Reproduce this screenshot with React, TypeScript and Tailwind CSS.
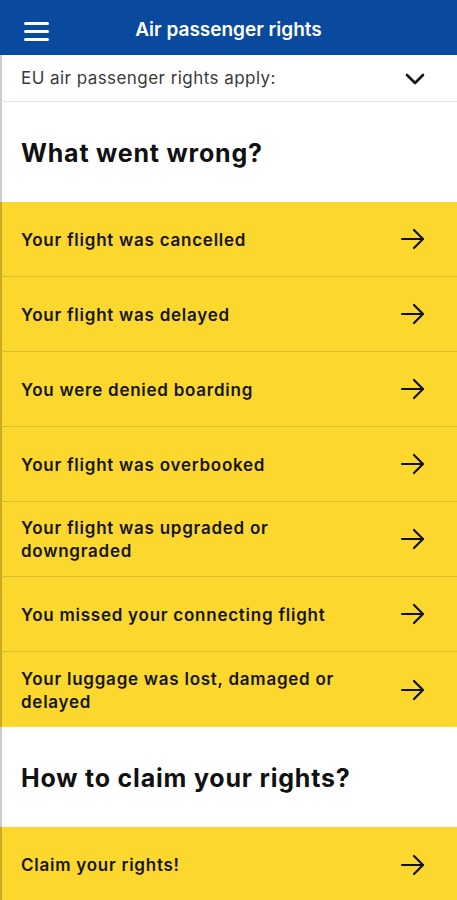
const items = [
  'Your flight was cancelled',
  'Your flight was delayed',
  'You were denied boarding',
  'Your flight was overbooked',
  'Your flight was upgraded or downgraded',
  'You missed your connecting flight',
  'Your luggage was lost, damaged or delayed',
]

function Arrow() {
  return (
    <svg width="26" height="22" viewBox="0 0 26 22" fill="none" stroke="#111" strokeWidth="2.2" strokeLinecap="round" strokeLinejoin="round">
      <path d="M2 11h21" />
      <path d="M14 2l9 9-9 9" />
    </svg>
  )
}

function Row({ label, last }: { label: string; last?: boolean }) {
  return (
    <div
      className={`flex h-[75px] items-center justify-between border-l-2 border-l-black/20 bg-[#fcd82f] pl-[19px] pr-[31px] ${
        last ? '' : 'border-b border-b-[#dcbd2c]'
      }`}
    >
      <span className="max-w-[340px] pt-[2px] text-[17px] font-semibold leading-[23px] tracking-[0.75px] text-[#161616]">{label}</span>
      <Arrow />
    </div>
  )
}

export default function App() {
  return (
    <div className="h-[900px] w-[457px] overflow-hidden bg-white font-['Inter',sans-serif]">
      {/* Header */}
      <div className="relative flex h-[55px] items-center justify-center bg-[#0a4a9e] pt-[5px]">
        <div className="absolute left-[24px] top-[22px] flex w-[25px] flex-col gap-[5px]">
          <span className="block h-[3px] rounded-full bg-white" />
          <span className="block h-[3px] rounded-full bg-white" />
          <span className="block h-[3px] rounded-full bg-white" />
        </div>
        <span className="text-[19px] font-semibold text-white">Air passenger rights</span>
      </div>

      {/* Applies dropdown */}
      <div className="flex h-[47px] items-center justify-between border-b border-l-2 border-b-[#e2e2e2] border-l-black/20 pl-[19px] pr-[32px] pt-[2px]">
        <span className="text-[17px] tracking-[0.45px] text-[#3a3a3a]">EU air passenger rights apply:</span>
        <svg width="20" height="12" viewBox="0 0 20 12" fill="none" stroke="#111" strokeWidth="2.6" strokeLinecap="round" strokeLinejoin="round">
          <path d="M2 2l8 8 8-8" />
        </svg>
      </div>

      <div className="flex h-[100px] items-center border-l-2 border-l-black/20 pl-[19px] pt-[3px]">
        <h2 className="text-[25px] font-bold tracking-[0.8px] text-[#111]">What went wrong?</h2>
      </div>

      {items.map((label, i) => (
        <Row key={label} label={label} last={i === items.length - 1} />
      ))}

      <div className="flex h-[100px] items-center border-l-2 border-l-black/20 pl-[19px] pt-[3px]">
        <h2 className="text-[25px] font-bold tracking-[0.8px] text-[#111]">How to claim your rights?</h2>
      </div>

      <Row label="Claim your rights!" last />
    </div>
  )
}
